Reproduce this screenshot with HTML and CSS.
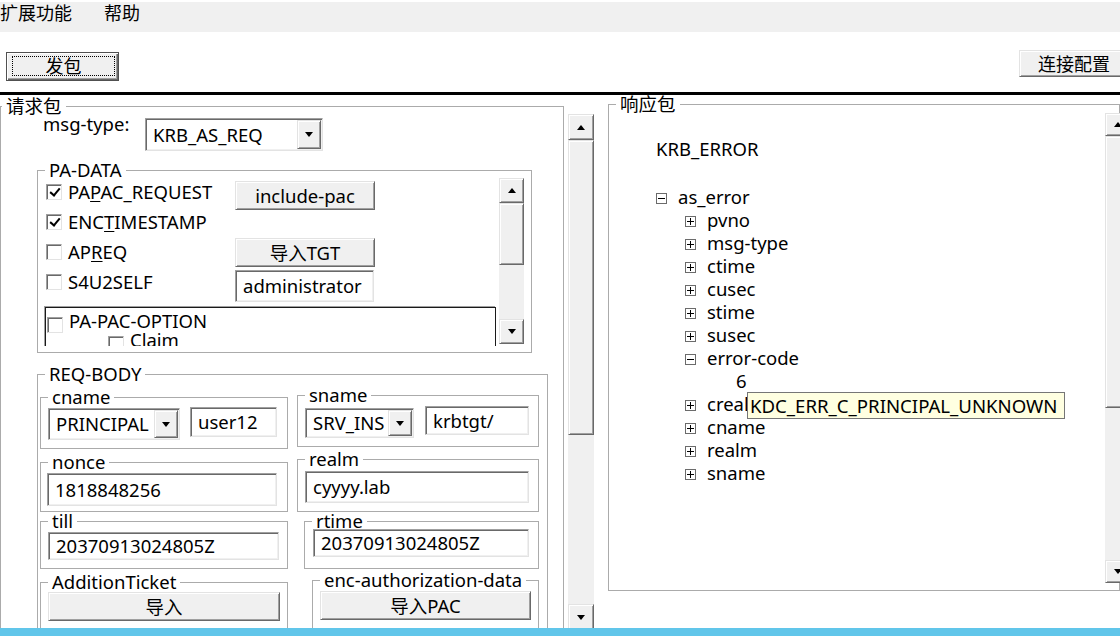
FILE: index.html
```html
<!DOCTYPE html>
<html lang="zh-CN">
<head>
<meta charset="utf-8">
<title>Kerberos</title>
<link rel="stylesheet" href="styles.css">
</head>
<body>
<div class="app">
  <nav class="menubar">
    <span class="menu-item">扩展功能</span>
    <span class="menu-item">帮助</span>
  </nav>
  <div class="toolbar">
    <div class="btn btn-send"><span class="focus">发包</span></div>
    <div class="btn btn-conn">连接配置</div>
  </div>
  <div class="sep"></div>
  <main class="main">
    <div class="left">
      <fieldset class="gb gb-req">
        <legend class="lg-req">请求包</legend>
        <div class="row-msg">
          <span class="lbl">msg-type:</span>
          <div class="select sel-msg"><span class="val">KRB_AS_REQ</span><span class="dd"><i class="tri-down"></i></span></div>
        </div>
        <fieldset class="gb gb-pa">
          <legend>PA-DATA</legend>
          <div class="pa-wrap">
            <div class="pa-view">
              <div class="pa-grid">
                <div class="checks">
                  <div class="cb-row"><span class="cb"><i class="tick"></i></span><span>PA<u>P</u>AC_REQUEST</span></div>
                  <div class="cb-row"><span class="cb"><i class="tick"></i></span><span>ENC<u>T</u>IMESTAMP</span></div>
                  <div class="cb-row"><span class="cb"></span><span>AP<u>R</u>EQ</span></div>
                  <div class="cb-row"><span class="cb"></span><span>S4U2SELF</span></div>
                </div>
                <div class="pa-btns">
                  <div class="btn b-incl">include-pac</div>
                  <div class="btn b-tgt">导入TGT</div>
                  <div class="sunken in-admin">administrator</div>
                </div>
              </div>
              <div class="opt-panel">
                <div class="opt-row"><span class="cb"></span><span>PA-PAC-OPTION</span></div>
                <div class="opt-row sub"><span class="cb"></span><span>Claim</span></div>
              </div>
            </div>
            <div class="vscroll vs-pa">
              <div class="sb-btn"><i class="tri-up"></i></div>
              <div class="sb-thumb"></div>
              <div class="sb-track"></div>
              <div class="sb-btn"><i class="tri-down"></i></div>
            </div>
          </div>
        </fieldset>
        <fieldset class="gb gb-body">
          <legend>REQ-BODY</legend>
          <div class="body-cols">
            <div class="col col-l">
              <fieldset class="gb f-cname">
                <legend>cname</legend>
                <div class="frow">
                  <div class="select sel-cname"><span class="val">PRINCIPAL</span><span class="dd"><i class="tri-down"></i></span></div>
                  <div class="sunken in-user">user12</div>
                </div>
              </fieldset>
              <fieldset class="gb f-nonce">
                <legend>nonce</legend>
                <div class="sunken in-nonce">1818848256</div>
              </fieldset>
              <fieldset class="gb f-till">
                <legend>till</legend>
                <div class="sunken in-till">20370913024805Z</div>
              </fieldset>
              <fieldset class="gb f-add">
                <legend>AdditionTicket</legend>
                <div class="btn b-add">导入</div>
              </fieldset>
            </div>
            <div class="col col-r">
              <fieldset class="gb f-sname">
                <legend>sname</legend>
                <div class="frow">
                  <div class="select sel-sname"><span class="val">SRV_INS</span><span class="dd"><i class="tri-down"></i></span></div>
                  <div class="sunken in-krb">krbtgt/</div>
                </div>
              </fieldset>
              <fieldset class="gb f-realm">
                <legend>realm</legend>
                <div class="sunken in-realm">cyyyy.lab</div>
              </fieldset>
              <fieldset class="gb f-rtime">
                <legend>rtime</legend>
                <div class="sunken in-rtime">20370913024805Z</div>
              </fieldset>
              <fieldset class="gb f-enc">
                <legend>enc-authorization-data</legend>
                <div class="btn b-pac">导入PAC</div>
              </fieldset>
            </div>
          </div>
        </fieldset>
      </fieldset>
      <div class="vscroll vs-main">
        <div class="sb-btn"><i class="tri-up"></i></div>
        <div class="sb-thumb"></div>
        <div class="sb-track"></div>
        <div class="sb-btn"><i class="tri-down"></i></div>
      </div>
    </div>
    <fieldset class="gb gb-resp">
      <legend>响应包</legend>
      <div class="resp-wrap">
        <div class="tree">
          <div class="node">KRB_ERROR</div>
          <div class="node gap"></div>
          <div class="node"><i class="tbox"></i>as_error</div>
          <div class="node l2"><i class="tbox plus"></i>pvno</div>
          <div class="node l2"><i class="tbox plus"></i>msg-type</div>
          <div class="node l2"><i class="tbox plus"></i>ctime</div>
          <div class="node l2"><i class="tbox plus"></i>cusec</div>
          <div class="node l2"><i class="tbox plus"></i>stime</div>
          <div class="node l2"><i class="tbox plus"></i>susec</div>
          <div class="node l2"><i class="tbox"></i>error-code</div>
          <div class="node l3">6</div>
          <div class="node l2"><i class="tbox plus"></i>crealm</div>
          <div class="node l2"><i class="tbox plus"></i>cname</div>
          <div class="node l2"><i class="tbox plus"></i>realm</div>
          <div class="node l2"><i class="tbox plus"></i>sname</div>
          <div class="tooltip">KDC_ERR_C_PRINCIPAL_UNKNOWN</div>
        </div>
        <div class="vscroll vs-resp">
          <div class="sb-btn"><i class="tri-up"></i></div>
          <div class="sb-thumb"></div>
          <div class="sb-track"></div>
          <div class="sb-btn"><i class="tri-down"></i></div>
        </div>
      </div>
    </fieldset>
  </main>
  <div class="status"></div>
</div>
</body>
</html>
```

FILE: styles.css
```css
* { box-sizing: border-box; }
html, body { margin: 0; padding: 0; }
body {
  width: 1120px;
  height: 636px;
  overflow: hidden;
  background: #fff;
  color: #000;
  font-family: "Noto Sans", "Noto Sans CJK SC", sans-serif;
  font-size: 18.5px;
  line-height: 20px;
}
.app { display: flex; flex-direction: column; height: 636px; }

/* menu */
.menubar {
  flex: none;
  display: flex;
  gap: 32px;
  margin-top: 2px;
  height: 30px;
  background: #f0f0f0;
  font-size: 18px;
  line-height: 23px;
}

/* toolbar */
.toolbar {
  flex: none;
  display: flex;
  justify-content: space-between;
  align-items: flex-start;
  height: 60px;
}
.btn {
  display: flex;
  align-items: center;
  justify-content: center;
  white-space: nowrap;
  background: #f0f0f0;
  border: 1px solid;
  border-color: #e3e3e3 #696969 #696969 #e3e3e3;
  box-shadow: inset 1px 1px 0 #fff, inset -1px -1px 0 #a0a0a0;
  line-height: 20px;
}
.btn-send {
  margin: 20px 0 0 6px;
  width: 113px;
  height: 29px;
  padding: 3px 3px 4px 5px;
  font-size: 18px;
  border-color: #505050;
  box-shadow: inset 1px 1px 0 #fff, inset -1px -1px 0 #696969, inset -2px -2px 0 #a0a0a0;
}
.btn-send .focus {
  flex: 1;
  align-self: stretch;
  display: flex;
  align-items: center;
  justify-content: center;
  border: 1px dotted #000;
}
.btn-conn {
  margin: 18px -10px 0 0;
  width: 111px;
  height: 27px;
  justify-content: flex-start;
  padding-left: 18px;
  font-size: 18px;
}
.sep { flex: none; height: 3px; background: #000; }

.main {
  flex: none;
  display: flex;
  align-items: flex-start;
  height: 533px;
  overflow: hidden;
}
.status { flex: none; height: 8px; background: #61c6ea; }

/* group boxes */
.gb {
  margin: 0;
  padding: 0;
  min-width: 0;
  border: 1px solid #ababab;
}
.gb > legend {
  padding: 0 4px;
  margin-left: 7px;
  height: 18px;
  line-height: 18px;
  white-space: nowrap;
}

.left { flex: none; display: flex; align-items: flex-start; width: 608px; }
.gb-req { margin-top: 2px; width: 564px; height: 560px; }
.gb-req > .lg-req { margin-left: 1px; }

.row-msg { display: flex; align-items: flex-start; height: 36px; }
.lbl { margin-left: 42px; width: 102px; line-height: 18px; }

/* sunken fields */
.sunken, .select {
  background: #fff;
  border: 1px solid;
  border-color: #a0a0a0 #e3e3e3 #e3e3e3 #a0a0a0;
  box-shadow: inset 1px 1px 0 #696969, inset -1px -1px 0 #f0f0f0;
  white-space: nowrap;
}
.sunken { display: flex; align-items: center; padding-left: 7px; }
.select { display: flex; align-items: center; }
.select .val { flex: 1; padding-left: 7px; }
.select .dd {
  flex: none;
  align-self: stretch;
  width: 24px;
  margin: 1px;
  display: flex;
  align-items: center;
  justify-content: center;
  background: #f0f0f0;
  border: 1px solid;
  border-color: #e3e3e3 #696969 #696969 #e3e3e3;
  box-shadow: inset 1px 1px 0 #fff, inset -1px -1px 0 #a0a0a0;
}
.tri-down, .tri-up { display: block; width: 0; height: 0; border-left: 4px solid transparent; border-right: 4px solid transparent; }
.tri-down { border-top: 5px solid #000; }
.tri-up { border-bottom: 5px solid #000; }

.sel-msg { margin-top: 3px; width: 178px; height: 33px; }

/* PA-DATA */
.gb-pa { margin: 10px 0 0 36px; width: 495px; height: 192px; }
.pa-wrap { display: flex; align-items: flex-start; height: 167px; padding-right: 7px; }
.pa-view { flex: 1; height: 167px; overflow: hidden; }
.pa-grid { display: flex; align-items: flex-start; }
.checks { width: 197px; padding-left: 8px; margin-top: -2px; }
.cb-row { display: flex; align-items: center; height: 30px; white-space: nowrap; }
.cb {
  flex: none;
  width: 16px;
  height: 16px;
  margin-right: 6px;
  display: flex;
  align-items: center;
  justify-content: center;
  background: #fff;
  border: 1px solid;
  border-color: #a0a0a0 #e3e3e3 #e3e3e3 #a0a0a0;
  box-shadow: inset 1px 1px 0 #696969;
}
.tick {
  display: block;
  width: 6px;
  height: 10px;
  margin: -3px 0 0 1px;
  border-right: 2.5px solid #000;
  border-bottom: 2.5px solid #000;
  transform: rotate(40deg);
}
u { text-decoration-thickness: 1px; text-underline-offset: 2px; }

.pa-btns { width: 140px; display: flex; flex-direction: column; }
.b-incl { margin-top: 2px; height: 29px; }
.b-tgt { margin-top: 28px; height: 29px; }
.in-admin { margin-top: 3px; width: 139px; height: 32px; }

.opt-panel {
  margin: 5px 0 0 7px;
  width: 451px;
  height: 60px;
  padding: 4px 0 0 1px;
  border: 1px solid #1a1a1a;
  box-shadow: -1px -1px 0 #a0a0a0;
}
.opt-row { display: flex; align-items: flex-start; height: 19px; line-height: 18px; white-space: nowrap; }
.opt-row .cb { margin-top: 5px; }
.opt-row.sub { padding-left: 61px; }

/* scrollbars */
.vscroll { flex: none; display: flex; flex-direction: column; background: #f0f0f0; }
.sb-btn, .sb-thumb {
  flex: none;
  background: #f0f0f0;
  border: 1px solid;
  border-color: #e3e3e3 #696969 #696969 #e3e3e3;
  box-shadow: inset 1px 1px 0 #fff, inset -1px -1px 0 #a0a0a0;
}
.sb-btn { display: flex; align-items: center; justify-content: center; }
.sb-track { flex: 1; }

.vs-pa { width: 25px; height: 166px; margin-top: -1px; }
.vs-pa .sb-btn { height: 25px; }
.vs-pa .sb-thumb { height: 62px; }

.vs-main { width: 26px; height: 516px; margin: 19px 0 0 4px; }
.vs-main .sb-btn { height: 26px; }
.vs-main .sb-thumb { height: 295px; }

/* REQ-BODY */
.gb-body { margin: 12px 0 0 36px; width: 511px; height: 320px; }
.body-cols { display: flex; align-items: flex-start; }
.col { display: flex; flex-direction: column; }
.col-l { margin-left: 2px; width: 248px; padding-top: 5px; }
.col-r { margin-left: 9px; width: 242px; padding-top: 3px; }
.frow { display: flex; align-items: flex-start; }

.f-cname { height: 61px; }
.sel-cname { margin: 2px 0 0 7px; width: 132px; height: 32px; }
.in-user { margin: 1px 0 0 10px; width: 87px; height: 30px; }

.f-nonce { margin-top: 4px; height: 59px; }
.in-nonce { margin: 2px 0 0 6px; width: 230px; height: 33px; }

.f-till { height: 57px; }
.in-till { margin: 2px 0 0 7px; width: 231px; height: 28px; }

.f-add { margin-top: 4px; height: 70px; }
.b-add { margin: 1px 0 0 7px; width: 232px; height: 29px; }

.f-sname { height: 61px; }
.sel-sname { margin: 4px 0 0 7px; width: 109px; height: 30px; }
.in-krb { margin: 2px 0 0 11px; width: 104px; height: 29px; }

.f-realm { margin-top: 3px; height: 62px; }
.in-realm { margin: 3px 0 0 7px; width: 224px; height: 32px; }

.f-rtime { margin-left: 7px; width: 235px; height: 57px; }
.in-rtime { margin: -1px 0 0 8px; width: 216px; height: 28px; }

.f-enc { margin: 2px 0 0 15px; width: 227px; height: 70px; }
.b-pac { margin: 2px 0 0 7px; width: 211px; height: 29px; }

/* response */
.gb-resp { width: 520px; height: 496px; }
.resp-wrap { display: flex; align-items: flex-start; height: 470px; }
.tree {
  position: relative;
  flex: none;
  width: 496px;
  height: 470px;
  padding: 24px 0 0 47px;
  line-height: 23px;
}
.node { height: 23px; white-space: nowrap; }
.node.gap { height: 25px; }
.node.l2 { padding-left: 29px; }
.node.l3 { padding-left: 80px; }
.tbox {
  position: relative;
  display: inline-block;
  width: 11px;
  height: 11px;
  margin-right: 11px;
  vertical-align: 0;
  background: #fff;
  border: 1px solid #6b6b6b;
}
.tbox::before {
  content: "";
  position: absolute;
  left: 1px;
  right: 1px;
  top: 4px;
  height: 1px;
  background: #000;
}
.tbox.plus::after {
  content: "";
  position: absolute;
  top: 1px;
  bottom: 1px;
  left: 4px;
  width: 1px;
  background: #000;
}
.tooltip {
  position: absolute;
  left: 138px;
  top: 279px;
  width: 318px;
  height: 27px;
  padding-left: 2px;
  background: #ffffe1;
  border: 1px solid #767676;
  font-size: 18.6px;
  line-height: 25px;
  white-space: nowrap;
}
.vs-resp { width: 26px; height: 470px; }
.vs-resp .sb-btn { height: 23px; }
.vs-resp .sb-thumb { height: 272px; }
```
